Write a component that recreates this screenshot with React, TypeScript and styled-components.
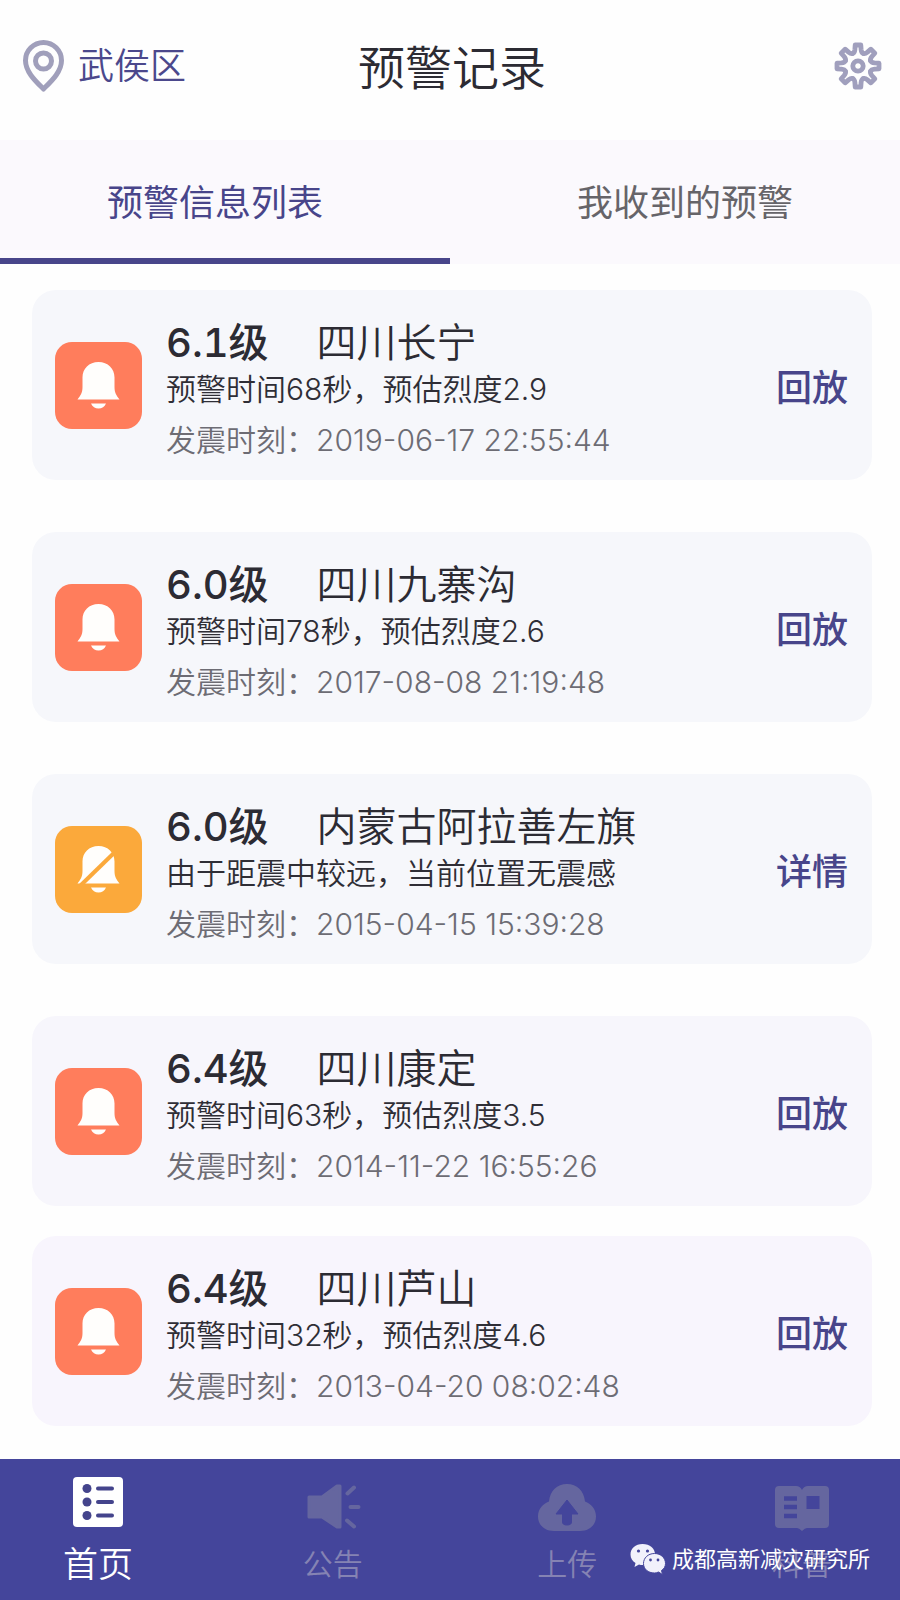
import React from "react";
import styled, { createGlobalStyle } from "styled-components";

const GlobalStyle = createGlobalStyle`
  *, *::before, *::after { box-sizing: border-box; }
  body {
    margin: 0;
    background: #fefefe;
    font-family: Inter, "Noto Sans CJK SC", sans-serif;
    color: #2c2b33;
  }
  button, a {
    font: inherit;
    color: inherit;
    background: none;
    border: 0;
    padding: 0;
    text-decoration: none;
    cursor: pointer;
  }
`;

const Page = styled.div`
  display: flex;
  flex-direction: column;
  min-height: 100vh;
`;

const Header = styled.header`
  display: grid;
  grid-template-columns: 1fr auto 1fr;
  align-items: center;
  height: 140px;
  padding: 0 18px 8px 22px;
`;

const LocationButton = styled.button`
  display: flex;
  align-items: center;
  justify-self: start;
  gap: 13px;
  font-size: 36px;
  line-height: 52px;
  font-weight: 350;
  color: #4b488c;
`;

const Title = styled.h1`
  margin: 0;
  padding-top: 4px;
  font-size: 47px;
  line-height: 64px;
  font-weight: 350;
`;

const SettingsButton = styled.button`
  display: flex;
  justify-self: end;
`;

const Tabs = styled.nav`
  display: flex;
  background: #fbf9fd;
`;

const Tab = styled.button<{ $active?: boolean }>`
  flex: 1;
  height: 124px;
  padding-top: 8px;
  padding-left: ${(p) => (p.$active ? 0 : 20)}px;
  padding-right: ${(p) => (p.$active ? 20 : 0)}px;
  border-bottom: 6px solid ${(p) => (p.$active ? "#48458a" : "transparent")};
  font-size: 36px;
  line-height: 52px;
  font-weight: 400;
  color: ${(p) => (p.$active ? "#48458a" : "#666469")};
`;

const List = styled.ul`
  display: flex;
  flex-direction: column;
  margin: 0;
  padding: 26px 28px 33px 32px;
  list-style: none;
`;

const Card = styled.li<{ $tone: string }>`
  display: flex;
  align-items: center;
  min-height: 190px;
  margin-bottom: 52px;
  padding: 0 24px 0 23px;
  border-radius: 24px;
  background: ${(p) => p.$tone};

  &:nth-last-child(2) { margin-bottom: 30px; }
  &:last-child { margin-bottom: 0; }
`;

const Badge = styled.span<{ $muted?: boolean }>`
  display: flex;
  flex: none;
  width: 87px;
  height: 87px;
  border-radius: 17px;
  background: ${(p) => (p.$muted ? "#fba93b" : "#ff7d5c")};
`;

const Details = styled.div`
  flex: 1;
  min-width: 0;
  padding-top: 8px;
  padding-left: 24px;
`;

const Headline = styled.h2`
  display: flex;
  gap: 48px;
  margin: 0;
  font-size: 40px;
  line-height: 54px;
  font-weight: 350;
`;

const Magnitude = styled.span`
  font-weight: 500;
  font-variant-numeric: tabular-nums;
`;

const Summary = styled.p`
  margin: 0;
  font-size: 30px;
  line-height: 38px;
  font-weight: 350;
  color: #2f2e36;
`;

const Time = styled.p`
  margin: 10px 0 0;
  font-size: 30px;
  line-height: 44px;
  font-weight: 350;
  color: #6d6c74;
`;

const Action = styled.button`
  flex: none;
  padding-top: 6px;
  font-size: 36px;
  line-height: 52px;
  font-weight: 500;
  color: #48458a;
`;

const BottomBar = styled.footer`
  position: relative;
  margin-top: auto;
  background: #44459b;
`;

const BottomNav = styled.nav`
  display: flex;
  justify-content: space-between;
  min-height: 141px;
  padding: 13px 62px 0;
`;

const NavItem = styled.a<{ $active?: boolean }>`
  display: flex;
  flex-direction: column;
  align-items: center;
  width: 72px;
  font-size: ${(p) => (p.$active ? 35 : 30)}px;
  line-height: 48px;
  font-weight: 350;
  white-space: nowrap;
  color: ${(p) => (p.$active ? "#ffffff" : "#8583b3")};
`;

const Watermark = styled.div`
  position: absolute;
  right: 30px;
  bottom: 25px;
  display: flex;
  align-items: center;
  gap: 6px;
  font-size: 22px;
  line-height: 32px;
  color: #ffffff;
`;

const PinIcon = () => (
  <svg width="43" height="54" viewBox="0 0 43 54" fill="none" stroke="#a09fbb" strokeWidth="5" strokeLinejoin="round">
    <path d="M21.5 50C14 42.5 3.5 33 3.5 21.5a18 18 0 0 1 36 0C39.5 33 29 42.5 21.5 50Z" />
    <circle cx="21.5" cy="22" r="8" />
  </svg>
);

const GearIcon = () => (
  <svg width="48" height="48" viewBox="-24 -24 48 48" fill="none" stroke="#a09fbd" strokeWidth="4.8" strokeLinejoin="round" strokeLinecap="round">
    {[0, 45, 90, 135, 180, 225, 270, 315].map((angle) => (
      <path key={angle} transform={`rotate(${angle})`} d="M-5.2 -12.6 Q-3.4 -13.4 -3.1 -16.5 L-2.8 -21 H2.8 L3.1 -16.5 Q3.4 -13.4 5.2 -12.6" />
    ))}
    <circle r="5.2" strokeWidth="4.8" />
  </svg>
);

const BellIcon = ({ muted }: { muted?: boolean }) => (
  <svg width="87" height="87" viewBox="0 0 87 87" fill="#fffefc">
    <path d="M43.5 20C34 20 27.5 26.5 27.5 35.5V45C27.5 51 25.5 53.5 22.5 57.5H64.5C61.5 53.5 59.5 51 59.5 45V35.5C59.5 26.5 53 20 43.5 20Z" />
    <path d="M36 61.5H51C49.5 65 47 66.5 43.5 66.5S37.5 65 36 61.5Z" />
    {muted && <path d="M25 60L61 25" stroke="#fba93b" strokeWidth="4" />}
  </svg>
);

const HomeIcon = () => (
  <svg width="52" height="68" viewBox="0 0 52 68">
    <rect x="1" y="5" width="50" height="50" rx="4" fill="#ffffff" />
    {[16.5, 30, 43.5].map((y) => (
      <g key={y}>
        <circle cx="15" cy={y} r="4.5" fill="#44448c" />
        <path d={`M26 ${y}H40`} stroke="#44448c" strokeWidth="4" strokeLinecap="round" />
      </g>
    ))}
  </svg>
);

const HornIcon = () => (
  <svg width="56" height="68" viewBox="0 0 56 68" fill="#65669f" stroke="#65669f" strokeLinecap="round" strokeLinejoin="round">
    <path d="M4 25H17L32 14H35V55H32L17 45H4Z" strokeWidth="3" />
    <path d="M42.5 21.5L49 15.5M45.500 35H53.5M42 48.500L49 54.5" strokeWidth="4" />
  </svg>
);

const CloudIcon = () => (
  <svg width="60" height="68" viewBox="0 0 60 68">
    <path d="M17 59C7 59 1 52.5 1 44.5C1 37 6 31.5 12 29.5C13 19 20 12 30 12S47 19 48 29.5C54 31.5 59 37 59 44.5C59 52.5 53 59 43 59Z" fill="#65669f" />
    <path d="M30 28L41 42H34.5V50Q34.5 53 30 53T25.5 50V42H19Z" fill="#44459b" stroke="#44459b" strokeLinejoin="round" />
  </svg>
);

const BookIcon = () => (
  <svg width="56" height="68" viewBox="0 0 56 68">
    <path d="M5 14H22Q26 14 28 18Q30 14 34 14H51Q55 14 55 18V52Q55 56 51 56H33Q31 56 28 59Q25 56 23 56H5Q1 56 1 52V18Q1 14 5 14Z" fill="#65669f" />
    <path d="M10 26.5H23M10 35H23M10 44H23" stroke="#44459b" strokeWidth="4.5" />
    <rect x="32.5" y="24" width="13" height="13" fill="#44459b" />
  </svg>
);

const WechatIcon = () => (
  <svg width="36" height="32" viewBox="0 0 36 32">
    <path d="M12.5 1C5.5 1 0.5 5.5 0.5 11.5C0.5 15.5 2.5 18 5.5 20L4.5 24L9 21.5C10 22 11.5 22 13 22C20 22 25 17.5 25 11.5S20 1 12.5 1Z" fill="#f1f1fb" />
    <path d="M24.5 10.5C18 10.5 13.5 15 13.5 20.5C13.5 26 18 30 24.5 30C26 30 27.5 29.5 28.5 29L32.5 31.5L31.5 27.5C34 26 35.5 23.5 35.5 20.5C35.5 15 31 10.5 24.5 10.5Z" fill="#f1f1fb" stroke="#44459b" />
    <g fill="#44459b">
      <circle cx="8.5" cy="8" r="1.6" />
      <circle cx="17.5" cy="8" r="1.6" />
      <circle cx="20.5" cy="17" r="1.4" />
      <circle cx="28" cy="17" r="1.4" />
    </g>
  </svg>
);

interface Quake {
  magnitude: string;
  place: string;
  summary: string;
  time: string;
  tone: string;
  muted?: boolean;
}

const quakes: Quake[] = [
  { magnitude: "6.1级", place: "四川长宁", summary: "预警时间68秒，预估烈度2.9", time: "2019-06-17 22:55:44", tone: "#f6f7fb" },
  { magnitude: "6.0级", place: "四川九寨沟", summary: "预警时间78秒，预估烈度2.6", time: "2017-08-08 21:19:48", tone: "#f6f7fb" },
  { magnitude: "6.0级", place: "内蒙古阿拉善左旗", summary: "由于距震中较远，当前位置无震感", time: "2015-04-15 15:39:28", tone: "#f6f7fb", muted: true },
  { magnitude: "6.4级", place: "四川康定", summary: "预警时间63秒，预估烈度3.5", time: "2014-11-22 16:55:26", tone: "#f7f6fc" },
  { magnitude: "6.4级", place: "四川芦山", summary: "预警时间32秒，预估烈度4.6", time: "2013-04-20 08:02:48", tone: "#f8f5fd" },
];

export default function App() {
  return (
    <Page>
      <GlobalStyle />
      <Header>
        <LocationButton>
          <PinIcon />
          武侯区
        </LocationButton>
        <Title>预警记录</Title>
        <SettingsButton aria-label="设置">
          <GearIcon />
        </SettingsButton>
      </Header>
      <Tabs>
        <Tab $active>预警信息列表</Tab>
        <Tab>我收到的预警</Tab>
      </Tabs>
      <List>
        {quakes.map((q) => (
          <Card key={q.time} $tone={q.tone}>
            <Badge $muted={q.muted}>
              <BellIcon muted={q.muted} />
            </Badge>
            <Details>
              <Headline>
                <Magnitude>{q.magnitude}</Magnitude>
                <span>{q.place}</span>
              </Headline>
              <Summary>{q.summary}</Summary>
              <Time>发震时刻：{q.time}</Time>
            </Details>
            <Action>{q.muted ? "详情" : "回放"}</Action>
          </Card>
        ))}
      </List>
      <BottomBar>
        <BottomNav>
          <NavItem href="#home" $active>
            <HomeIcon />
            首页
          </NavItem>
          <NavItem href="#notice">
            <HornIcon />
            公告
          </NavItem>
          <NavItem href="#upload">
            <CloudIcon />
            上传
          </NavItem>
          <NavItem href="#science">
            <BookIcon />
            科普
          </NavItem>
        </BottomNav>
        <Watermark>
          <WechatIcon />
          成都高新减灾研究所
        </Watermark>
      </BottomBar>
    </Page>
  );
}
